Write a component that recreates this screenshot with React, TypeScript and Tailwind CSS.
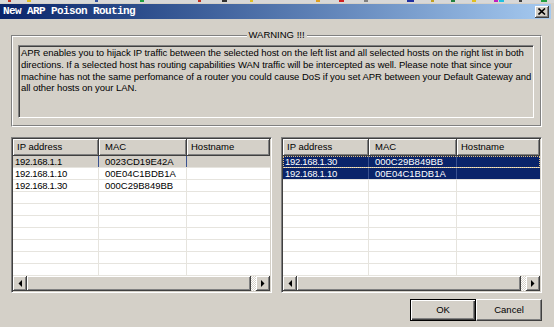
type Host = { ip: string; mac: string }

const leftHosts: Host[] = [
  { ip: '192.168.1.1', mac: '0023CD19E42A' },
  { ip: '192.168.1.10', mac: '00E04C1BDB1A' },
  { ip: '192.168.1.30', mac: '000C29B849BB' },
]

const rightHosts: Host[] = [
  { ip: '192.168.1.30', mac: '000C29B849BB' },
  { ip: '192.168.1.10', mac: '00E04C1BDB1A' },
]

const warningLines = [
  'APR enables you to hijack IP traffic between the selected host on the left list and all selected hosts on the right list in both',
  'directions. If a selected host has routing capabilities WAN traffic will be intercepted as well. Please note that since your',
  'machine has not the same perfomance of a router you could cause DoS if you set APR between your Default Gateway and',
  'all other hosts on your LAN.',
]

// leftover pixels of the window above the dialog
const stripBits = [
  { x: 8, w: 3, c: '#c03020' },
  { x: 27, w: 4, c: '#e0c020' },
  { x: 95, w: 3, c: '#3050a0' },
  { x: 140, w: 4, c: '#20a040' },
  { x: 198, w: 3, c: '#c03020' },
  { x: 222, w: 5, c: '#303030' },
  { x: 250, w: 3, c: '#e0c020' },
  { x: 316, w: 4, c: '#e0a020' },
  { x: 339, w: 5, c: '#d02020' },
  { x: 364, w: 4, c: '#808080' },
  { x: 407, w: 7, c: '#2030a0' },
  { x: 431, w: 3, c: '#c0a020' },
  { x: 451, w: 4, c: '#208040' },
  { x: 472, w: 4, c: '#e0c020' },
  { x: 494, w: 4, c: '#c020c0' },
  { x: 499, w: 5, c: '#20c0e0' },
  { x: 519, w: 3, c: '#404040' },
  { x: 541, w: 6, c: '#20a040' },
]

const Arrow = ({ dir }: { dir: 'left' | 'right' }) => (
  <svg width="4" height="7" viewBox="0 0 4 7">
    {dir === 'left' ? <path d="M4 0V7L0.5 3.5Z" fill="#000" /> : <path d="M0 0V7L3.5 3.5Z" fill="#000" />}
  </svg>
)

const raised =
  'bg-[#d4d0c8] border-r border-b border-r-[#404040] border-b-[#404040] shadow-[inset_1px_1px_0_#fff,inset_-1px_-1px_0_#808080]'

const ScrollBar = () => (
  <div className="flex h-[15px] bg-[#d4d0c8]">
    <div className={`${raised} w-[14px] flex items-center justify-center`}>
      <Arrow dir="left" />
    </div>
    <div className={`${raised} flex-1`} />
    <div className="w-[5px] bg-[repeating-conic-gradient(#ffffff_0%_25%,#d4d0c8_0%_50%)] bg-size-[2px_2px]" />
    <div className={`${raised} w-[14px] flex items-center justify-center`}>
      <Arrow dir="right" />
    </div>
  </div>
)

const ListView = ({ hosts, mode }: { hosts: Host[]; mode: 'grey' | 'blue' }) => {
  const rows = Array.from({ length: 10 }, (_, i) => hosts[i])

  return (
    <div className="w-[261px] h-[156px] flex flex-col bg-white border border-t-[#808080] border-l-[#808080] border-r-white border-b-white shadow-[inset_1px_1px_0_#404040,inset_-1px_-1px_0_#d4d0c8] p-px">
      <div className="flex h-[17px] shrink-0">
        <div className={`${raised} w-[86px] pl-[4px] leading-[16px]`}>IP address</div>
        <div className={`${raised} w-[88px] pl-[6px] leading-[16px]`}>MAC</div>
        <div className={`${raised} flex-1 pl-[4px] leading-[16px]`}>Hostname</div>
      </div>
      <div className="flex-1 flex flex-col">
        {rows.map((h, i) => {
          const sel = !!h && (mode === 'blue' || i === 0)
          const bg = sel ? (mode === 'blue' ? 'bg-[#0a246a] text-white' : 'bg-[#d4d0c8]') : ''
          const focus = mode === 'blue' && i === 0 ? 'outline outline-1 outline-dotted outline-[#e0c080] -outline-offset-1' : ''
          return (
            <div key={i} className={`flex h-[12px] leading-[11px] border-b border-[#e6e4de] ${bg} ${focus}`}>
              <div className={`w-[86px] pl-[2px] tracking-[-0.3px] border-r ${sel ? 'border-[#3a5290]' : 'border-[#e6e4de]'}`}>{h?.ip}</div>
              <div className={`w-[88px] pl-[6px] border-r ${sel ? 'border-[#3a5290]' : 'border-[#e6e4de]'}`}>{h?.mac}</div>
              <div className="flex-1" />
            </div>
          )
        })}
      </div>
      <ScrollBar />
    </div>
  )
}

export default function App() {
  return (
    <div className="w-[554px] h-[327px] overflow-hidden bg-[#d4d0c8] flex flex-col font-['Liberation_Sans',Arial,sans-serif] text-[9.5px] text-black">
      <svg width="554" height="3" className="shrink-0 block">
        <rect width="554" height="3" fill="#d8d8d8" />
        {stripBits.map((b, i) => (
          <rect key={i} x={b.x} y="0" width={b.w} height="2" fill={b.c} />
        ))}
      </svg>
      <div className="h-px shrink-0 bg-[#d4d0c8]" />

      <div className="h-[15px] mr-[3px] shrink-0 flex items-center justify-between bg-linear-to-r from-[#0a246a] to-[#a6caf0]">
        <span className="pl-[3px] font-['Liberation_Mono',monospace] font-bold text-[11px] tracking-[-0.6px] text-white leading-[15px]">
          New ARP Poison Routing
        </span>
        <div className={`${raised} mr-[2px] w-[14px] h-[12px] flex items-center justify-center`}>
          <svg width="8" height="7" viewBox="0 0 8 7">
            <path d="M0.5 0.5L7 6.5M7 0.5L0.5 6.5" stroke="#000" strokeWidth="1.6" />
          </svg>
        </div>
      </div>

      <div className="pl-[11px] pr-[12px] flex flex-col">
        <div className="relative mt-[16px] h-[92px] border border-t-[#808080] border-l-[#808080] border-r-white border-b-white">
          <div className="h-full border border-t-white border-l-white border-r-[#808080] border-b-[#808080] pl-[5px] pt-[8px]">
            <div className="w-[516px] h-[73px] pl-[1px] pt-[1px] border border-t-[#808080] border-l-[#808080] border-r-white border-b-white shadow-[inset_1px_1px_0_#404040,inset_-1px_-1px_0_#d4d0c8]">
              {warningLines.map((l) => (
                <div key={l} className="whitespace-nowrap leading-[11.8px] pl-[1px] tracking-[-0.05px]">
                  {l}
                </div>
              ))}
            </div>
          </div>
          <span className="absolute -top-[7px] left-1/2 -translate-x-1/2 bg-[#d4d0c8] px-[2px] leading-[12px] whitespace-nowrap">
            WARNING !!!
          </span>
        </div>

        <div className="mt-[10px] flex gap-[9px]">
          <ListView hosts={leftHosts} mode="grey" />
          <ListView hosts={rightHosts} mode="blue" />
        </div>

        <div className="mt-[6px] flex justify-end">
          <button className="w-[66px] h-[22px] bg-[#d4d0c8] border border-black shadow-[inset_1px_1px_0_#fff,inset_-1px_-1px_0_#404040,inset_-2px_-2px_0_#808080]">
            OK
          </button>
          <button className="w-[66px] h-[22px] bg-[#d4d0c8] border border-t-white border-l-white border-r-[#404040] border-b-[#404040] shadow-[inset_-1px_-1px_0_#808080]">
            Cancel
          </button>
        </div>
      </div>
    </div>
  )
}
